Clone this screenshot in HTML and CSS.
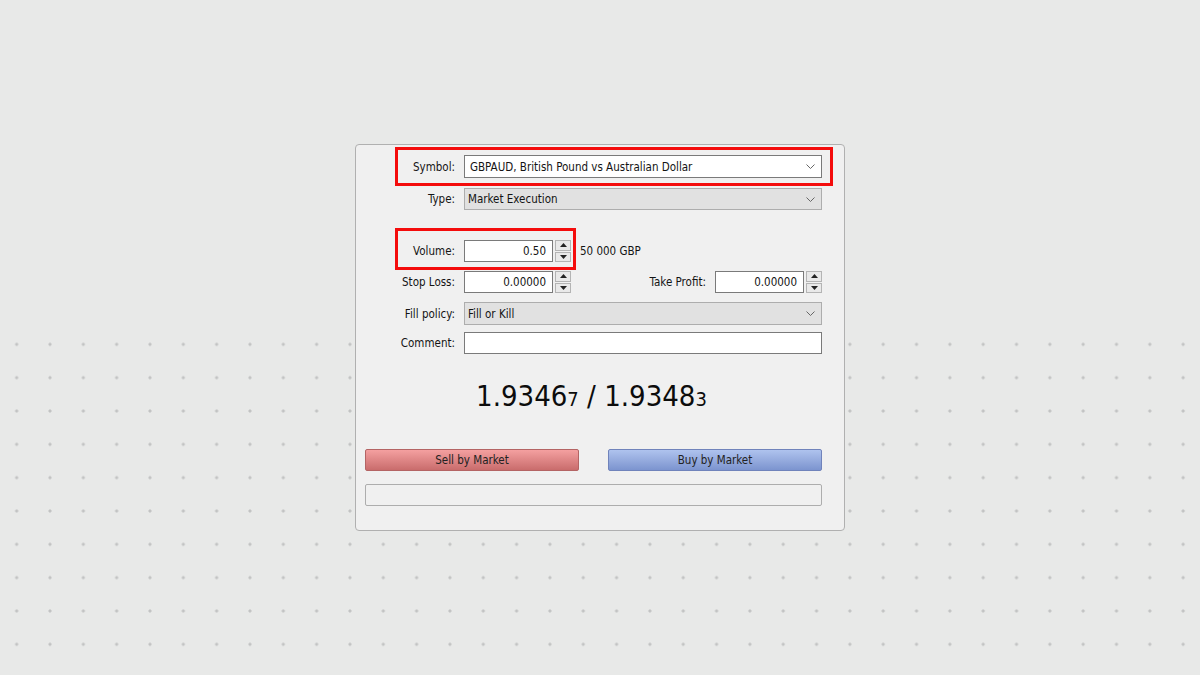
FILE: index.html
```html
<!DOCTYPE html>
<html lang="en">
<head>
  <meta charset="UTF-8">
  <title>Order</title>
  <link rel="stylesheet" href="styles.css">
</head>
<body>

  <div class="dialog">
    <div class="mark mark-symbol"></div>
    <div class="mark mark-volume"></div>

    <div class="row row-symbol">
      <label class="label">Symbol:</label>
      <div class="select select-white">
        <span class="select-text pad5">GBPAUD, British Pound vs Australian Dollar</span>
        <svg class="chevron" width="9" height="5" viewBox="0 0 9 5"><polyline points="0.5,0.5 4.5,4.5 8.5,0.5" fill="none" stroke="#666" stroke-width="1"/></svg>
      </div>
    </div>

    <div class="row row-type">
      <label class="label">Type:</label>
      <div class="select">
        <span class="select-text">Market Execution</span>
        <svg class="chevron" width="9" height="5" viewBox="0 0 9 5"><polyline points="0.5,0.5 4.5,4.5 8.5,0.5" fill="none" stroke="#666" stroke-width="1"/></svg>
      </div>
    </div>

    <div class="row row-volume">
      <label class="label">Volume:</label>
      <div class="num">0.50</div>
      <div class="spin">
        <div class="spin-btn"><svg width="7" height="4" viewBox="0 0 7 4"><polygon points="3.5,0 7,4 0,4" fill="#222"/></svg></div>
        <div class="spin-btn"><svg width="7" height="4" viewBox="0 0 7 4"><polygon points="0,0 7,0 3.5,4" fill="#222"/></svg></div>
      </div>
      <span class="hint">50 000 GBP</span>
    </div>

    <div class="row row-stops">
      <label class="label">Stop Loss:</label>
      <div class="num">0.00000</div>
      <div class="spin">
        <div class="spin-btn"><svg width="7" height="4" viewBox="0 0 7 4"><polygon points="3.5,0 7,4 0,4" fill="#222"/></svg></div>
        <div class="spin-btn"><svg width="7" height="4" viewBox="0 0 7 4"><polygon points="0,0 7,0 3.5,4" fill="#222"/></svg></div>
      </div>
      <label class="label-inline">Take Profit:</label>
      <div class="num">0.00000</div>
      <div class="spin">
        <div class="spin-btn"><svg width="7" height="4" viewBox="0 0 7 4"><polygon points="3.5,0 7,4 0,4" fill="#222"/></svg></div>
        <div class="spin-btn"><svg width="7" height="4" viewBox="0 0 7 4"><polygon points="0,0 7,0 3.5,4" fill="#222"/></svg></div>
      </div>
    </div>

    <div class="row row-fill">
      <label class="label">Fill policy:</label>
      <div class="select">
        <span class="select-text">Fill or Kill</span>
        <svg class="chevron" width="9" height="5" viewBox="0 0 9 5"><polyline points="0.5,0.5 4.5,4.5 8.5,0.5" fill="none" stroke="#666" stroke-width="1"/></svg>
      </div>
    </div>

    <div class="row row-comment">
      <label class="label">Comment:</label>
      <div class="text-field"></div>
    </div>

    <div class="price">1.9346<small>7</small> / 1.9348<small>3</small></div>

    <div class="buttons">
      <button class="btn btn-sell">Sell by Market</button>
      <button class="btn btn-buy">Buy by Market</button>
    </div>

    <div class="status"></div>
  </div>

</body>
</html>
```

FILE: styles.css
```css
html, body {
  margin: 0;
  height: 100%;
}

body {
  display: flex;
  align-items: center;
  justify-content: center;
  font-family: "DejaVu Sans", "Liberation Sans", sans-serif;
  font-stretch: condensed;
  font-size: 11.5px;
  color: #141414;
  background:
    linear-gradient(#e8e9e8, #e8e9e8) 0 0 / 100% 327px no-repeat,
    radial-gradient(circle, #c2c3c3 1.3px, transparent 1.8px) 0 327.7px / 33.33px 33.33px,
    #e8e9e8;
}

.dialog {
  position: relative;
  box-sizing: border-box;
  width: 490px;
  height: 387px;
  padding: 10px 22px 24px 9px;
  background: #f0f0f0;
  border: 1px solid #b0b0b0;
  border-radius: 4px;
}

/* red highlight frames drawn over the form */
.mark {
  position: absolute;
  border: 3px solid #f40c0c;
  box-sizing: border-box;
}

.mark-symbol {
  left: 39px;
  top: 2px;
  width: 438px;
  height: 39px;
}

.mark-volume {
  left: 39px;
  top: 83px;
  width: 181px;
  height: 42px;
}

.row {
  display: flex;
  align-items: center;
  height: 22px;
}

.row-symbol { height: 23px; }
.row-type { margin-top: 10px; }
.row-volume { margin-top: 30px; }
.row-stops { margin-top: 9px; }
.row-fill { margin-top: 9px; height: 23px; }
.row-comment { margin-top: 7px; }

.label {
  width: 90px;
  flex: none;
  margin-right: 9px;
  text-align: right;
}

.label-inline {
  margin-left: auto;
  margin-right: 9px;
}

.select {
  flex: 1;
  height: 100%;
  box-sizing: border-box;
  display: flex;
  align-items: center;
  background: #e1e1e1;
  border: 1px solid #adadad;
}

.select-white {
  background: #fff;
  border-color: #7a7a7a;
}

.select-text {
  flex: 1;
  padding-left: 3px;
  white-space: nowrap;
}

.pad5 { padding-left: 5px; }

.chevron {
  margin-right: 6px;
}

.num {
  width: 89px;
  height: 100%;
  box-sizing: border-box;
  padding-right: 6px;
  display: flex;
  align-items: center;
  justify-content: flex-end;
  background: #fff;
  border: 1px solid #7a7a7a;
}

.spin {
  width: 16px;
  height: 100%;
  margin-left: 2px;
  display: flex;
  flex-direction: column;
  gap: 1px;
}

.spin-btn {
  flex: 1;
  display: flex;
  align-items: center;
  justify-content: center;
  background: #e9e9e9;
  border: 1px solid #b4b4b4;
}

.hint {
  margin-left: 9px;
}

.text-field {
  flex: 1;
  height: 100%;
  box-sizing: border-box;
  background: #fff;
  border: 1px solid #7a7a7a;
}

.price {
  margin-top: 26px;
  height: 32px;
  line-height: 32px;
  text-align: center;
  font-size: 29px;
  color: #0c0c0c;
  padding-right: 4px;
}

.price small {
  font-size: 20px;
}

.buttons {
  display: flex;
  justify-content: space-between;
  margin-top: 37px;
}

.btn {
  width: 214px;
  height: 22px;
  padding: 0;
  font: inherit;
  color: #222;
  border-radius: 2px;
  cursor: pointer;
}

.btn-sell {
  background: linear-gradient(#f4a0a0, #c96c6c);
  border: 1px solid #b46464;
}

.btn-buy {
  background: linear-gradient(#afc3ee, #7c94cf);
  border: 1px solid #7083bb;
}

.status {
  margin-top: 13px;
  height: 22px;
  box-sizing: border-box;
  border: 1px solid #adadad;
  border-radius: 2px;
  background: #f0f0f0;
}
```
